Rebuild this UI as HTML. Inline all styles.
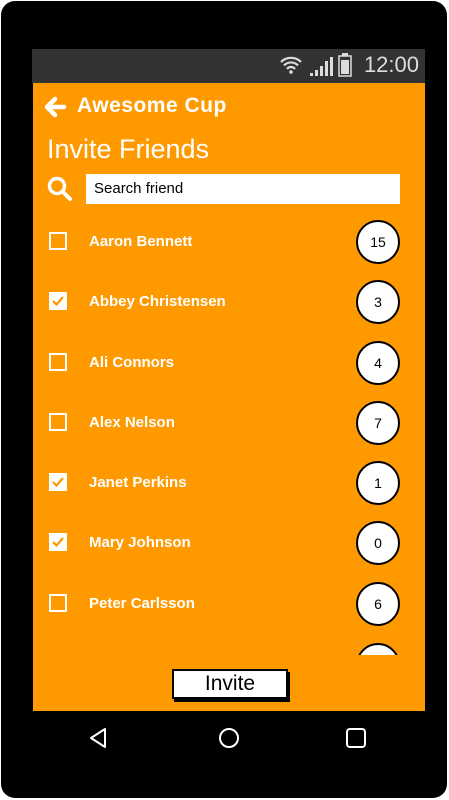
<!DOCTYPE html>
<html><head><meta charset="utf-8"><style>
*{margin:0;padding:0;box-sizing:border-box}
body{width:449px;height:800px;background:#fff;position:relative;overflow:hidden;font-family:"Liberation Sans",sans-serif}
.phone{position:absolute;left:1px;top:1px;width:446px;height:797px;background:#000;border-radius:14px}
.status{position:absolute;left:32px;top:49px;width:393px;height:34px;background:#333}
.time{position:absolute;right:6px;top:3px;color:#ddd;font-size:22px}
.screen{position:absolute;left:33px;top:83px;width:392px;height:628px;background:#ff9900}
.t1{position:absolute;left:44px;top:94px;color:#fff;font-weight:bold;font-size:21px;letter-spacing:0.5px}
.t2{position:absolute;left:47px;top:134px;color:#fff;font-size:27px}
.search{position:absolute;left:86px;top:174px;width:314px;height:30px;background:#fff;font-size:15px;padding:6px 8px;color:#000}
.list{position:absolute;left:33px;top:210px;width:392px;height:445px;overflow:hidden}
.row{position:absolute;left:0;width:392px;height:44px}
.cb{position:absolute;left:16px;top:12px;width:18px;height:18px;border:2px solid #fff}
.cb.on{background:#fff}
.nm{position:absolute;left:56px;top:13px;color:#fff;font-size:15px;font-weight:bold}
.cir{position:absolute;left:323px;top:0;width:44px;height:44px;border:2px solid #000;border-radius:50%;background:#fff;text-align:center;line-height:40px;font-size:14px}
.btn{position:absolute;left:172px;top:669px;width:116px;height:30px;background:#fff;border:2px solid #000;box-shadow:2px 3px 0 #000;text-align:center;font-size:21px;line-height:26px}
.nav{position:absolute;left:32px;top:711px;width:393px;height:52px;background:#000}
</style></head><body>
<div class="phone"></div>
<div class="status">
<svg style="position:absolute;left:247px;top:6px" width="24" height="20" viewBox="0 0 24 20"><path d="M2 7a14 14 0 0 1 20 0M5 10.5a9.5 9.5 0 0 1 14 0M8 14a5 5 0 0 1 8 0" stroke="#ddd" stroke-width="2.2" fill="none"/><circle cx="12" cy="17" r="1.8" fill="#ddd"/></svg>
<svg style="position:absolute;left:278px;top:8px" width="28" height="20"><rect x="0" y="16" width="3" height="3" fill="#ddd"/><rect x="5" y="13" width="3" height="6" fill="#ddd"/><rect x="10" y="9" width="3" height="10" fill="#ddd"/><rect x="15" y="4" width="3" height="15" fill="#ddd"/><rect x="20" y="0" width="3" height="19" fill="#ddd"/></svg>
<svg style="position:absolute;left:306px;top:4px" width="14" height="24"><rect x="4" y="0" width="6" height="3" fill="#ddd"/><rect x="1" y="3" width="12" height="20" stroke="#ddd" stroke-width="1.5" fill="none"/><rect x="3" y="7" width="8" height="14" fill="#ddd"/></svg>
<div class="time">12:00</div>
</div>
<div class="screen"></div>
<svg style="position:absolute;left:43px;top:95px" width="24" height="24" viewBox="0 0 24 24"><path d="M21 12H4M12 4L4 12l8 8" stroke="#fff" stroke-width="4.5" fill="none" stroke-linecap="round" stroke-linejoin="round"/></svg>
<div class="t1" style="left:77px">Awesome Cup</div>
<div class="t2">Invite Friends</div>
<svg style="position:absolute;left:47px;top:176px" width="26" height="26" viewBox="0 0 26 26"><circle cx="10" cy="10" r="7.5" stroke="#fff" stroke-width="3.5" fill="none"/><path d="M15.5 15.5L23 23" stroke="#fff" stroke-width="4" stroke-linecap="round"/></svg>
<div class="search">Search friend</div>
<div class="list">
<div class="row" style="top:10px"><div class="cb"></div><div class="nm">Aaron Bennett</div><div class="cir">15</div></div>
<div class="row" style="top:70px"><div class="cb on"><svg width="14" height="14" style="position:absolute;left:0;top:0"><path d="M2 7l3.5 3.5L12 3" stroke="#ff9900" stroke-width="2.2" fill="none"/></svg></div><div class="nm">Abbey Christensen</div><div class="cir">3</div></div>
<div class="row" style="top:131px"><div class="cb"></div><div class="nm">Ali Connors</div><div class="cir">4</div></div>
<div class="row" style="top:191px"><div class="cb"></div><div class="nm">Alex Nelson</div><div class="cir">7</div></div>
<div class="row" style="top:251px"><div class="cb on"><svg width="14" height="14" style="position:absolute;left:0;top:0"><path d="M2 7l3.5 3.5L12 3" stroke="#ff9900" stroke-width="2.2" fill="none"/></svg></div><div class="nm">Janet Perkins</div><div class="cir">1</div></div>
<div class="row" style="top:311px"><div class="cb on"><svg width="14" height="14" style="position:absolute;left:0;top:0"><path d="M2 7l3.5 3.5L12 3" stroke="#ff9900" stroke-width="2.2" fill="none"/></svg></div><div class="nm">Mary Johnson</div><div class="cir">0</div></div>
<div class="row" style="top:372px"><div class="cb"></div><div class="nm">Peter Carlsson</div><div class="cir">6</div></div>
<div class="row" style="top:433px"><div class="cb"></div><div class="nm">Zoe Nelson</div><div class="cir">2</div></div>
</div>
<div class="btn">Invite</div>
<div class="nav">
<svg style="position:absolute;left:56px;top:16px" width="20" height="22"><path d="M17 2L3 11l14 9z" stroke="#fff" stroke-width="2" fill="none" stroke-linejoin="round"/></svg>
<svg style="position:absolute;left:186px;top:16px" width="22" height="22"><circle cx="11" cy="11" r="9" stroke="#fff" stroke-width="2" fill="none"/></svg>
<svg style="position:absolute;left:313px;top:16px" width="22" height="22"><rect x="2" y="2" width="18" height="18" rx="3" stroke="#fff" stroke-width="2" fill="none"/></svg>
</div>
</body></html>
